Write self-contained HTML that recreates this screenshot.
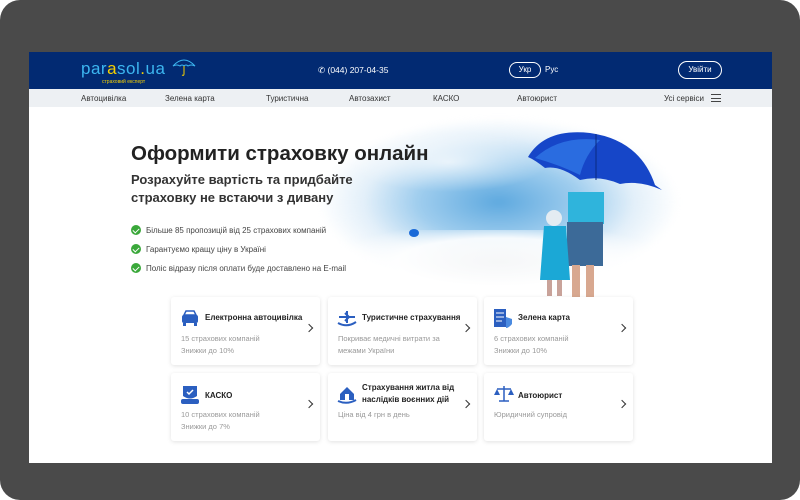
<!DOCTYPE html><html><head><meta charset="utf-8"><style>
*{margin:0;padding:0;box-sizing:border-box}
body{width:800px;height:500px;background:#fff;font-family:"Liberation Sans",sans-serif;position:relative;overflow:hidden}
.frame{position:absolute;left:0;top:0;width:800px;height:500px;background:#4a4a4a;border-radius:20px}
.page{position:absolute;left:29px;top:52px;width:743px;height:411px;background:#fff;overflow:hidden}
.hdr{position:absolute;left:0;top:0;width:743px;height:37px;background:#022a72}
.nav{position:absolute;left:0;top:37px;width:743px;height:18px;background:#edf0f3;font-size:8px;color:#333}
.nav span{position:absolute;top:5px}
.abs{position:absolute}
.card{position:absolute;width:149px;height:68px;background:#fff;border-radius:3px;box-shadow:0 1px 4px rgba(0,0,0,.12)}
.card b{position:absolute;left:34px;font-size:8px;color:#222;line-height:12px}
.card p{position:absolute;left:10px;font-size:7.5px;color:#999;line-height:12px}
.card i{position:absolute;right:8px;top:28px;width:6px;height:6px;border-right:1.5px solid #333;border-top:1.5px solid #333;transform:rotate(45deg)}
.card svg{position:absolute;left:9px;top:12px}
.chk{position:absolute;left:102px;width:10px;height:10px;border-radius:50%;background:#3aa83a}
.chk:after{content:"";position:absolute;left:3px;top:2px;width:3px;height:5px;border-right:1.5px solid #fff;border-bottom:1.5px solid #fff;transform:rotate(45deg)}
.li{position:absolute;left:117px;font-size:8px;color:#444}
</style></head><body>
<div class="frame"></div>
<div class="page">
<div class="hdr">
 <div class="abs" style="left:52px;top:7px;font-size:17px;letter-spacing:0.5px;color:#3cb6f0;font-weight:300">par<span style="color:#f5d000">a</span>sol<span style="color:#f5d000">.</span>ua</div>
 <div class="abs" style="left:73px;top:27px;font-size:5px;color:#f5d000">страховий експерт</div>
 <svg class="abs" style="left:142px;top:5px" width="26" height="20" viewBox="0 0 26 20"><path d="M2 9 Q13 -3 24 9 Q20 7 17 9 Q15 7 13 9 Q11 7 9 9 Q6 7 2 9Z" fill="none" stroke="#3cb6f0" stroke-width="1"/><path d="M13 9 V17 Q13 19 11 18" fill="none" stroke="#f5d000" stroke-width="1"/></svg>
 <div class="abs" style="left:289px;top:13px;font-size:8.5px;color:#fff">✆ (044) 207-04-35</div>
 <div class="abs" style="left:480px;top:10px;width:32px;height:16px;border:1px solid #fff;border-radius:8px;color:#fff;font-size:8px;text-align:center;line-height:14px">Укр</div>
 <div class="abs" style="left:516px;top:13px;color:#fff;font-size:8px">Рус</div>
 <div class="abs" style="left:649px;top:9px;width:44px;height:18px;border:1px solid #fff;border-radius:9px;color:#fff;font-size:8px;text-align:center;line-height:16px">Увійти</div>
</div>
<div class="nav">
 <span style="left:52px">Автоцивілка</span><span style="left:136px">Зелена карта</span><span style="left:237px">Туристична</span><span style="left:320px">Автозахист</span><span style="left:404px">КАСКО</span><span style="left:488px">Автоюрист</span><span style="left:635px">Усі сервіси</span>
 <div class="abs" style="left:682px;top:5px;width:10px;height:8px;border-top:1.3px solid #444;border-bottom:1.3px solid #444"></div>
 <div class="abs" style="left:682px;top:8.5px;width:10px;height:1.3px;background:#444"></div>
</div>
<!-- hero image -->
<div class="abs" style="left:290px;top:60px;width:360px;height:200px;background:radial-gradient(ellipse 50% 42% at 50% 45%,#5ea9df 0%,#9fcdee 45%,rgba(215,233,247,.7) 75%,rgba(255,255,255,0) 100%);filter:blur(3px)"></div>
<div class="abs" style="left:320px;top:80px;width:200px;height:60px;background:radial-gradient(ellipse 50% 50% at 50% 50%,rgba(255,255,255,.7),rgba(255,255,255,0));"></div>
<div class="abs" style="left:300px;top:178px;width:340px;height:80px;background:radial-gradient(ellipse 50% 50% at 50% 40%,#f6f7f8 0%,rgba(255,255,255,.9) 60%,rgba(255,255,255,0) 100%)"></div>
<svg class="abs" style="left:-29px;top:-52px" width="800" height="500">
 <path d="M528 157 Q545 128 590 133 Q640 140 655 185 Q662 190 662 190 Q640 180 620 184 Q600 175 580 180 Q560 165 545 168 Q535 160 528 157Z" fill="#1646c8"/>
 <path d="M535 158 Q560 135 600 140 Q585 155 580 175 Q560 165 535 158Z" fill="#2a6ce0"/>
 <line x1="596" y1="134" x2="596" y2="180" stroke="#0b2a80" stroke-width="1"/>
 <rect x="568" y="192" width="36" height="32" fill="#2fb4dc"/>
 <rect x="567" y="222" width="36" height="44" fill="#3c6a98"/>
 <rect x="572" y="265" width="8" height="32" fill="#d8a890"/><rect x="586" y="265" width="8" height="32" fill="#d8a890"/>
 <circle cx="554" cy="218" r="8" fill="#e4ecf2"/>
 <path d="M544 226 H566 L570 280 H540Z" fill="#1ba8d6"/>
 <rect x="547" y="280" width="5" height="16" fill="#c9a39a"/><rect x="557" y="280" width="5" height="16" fill="#c9a39a"/>
 <ellipse cx="414" cy="233" rx="5" ry="4" fill="#1a6ad8"/>
</svg>
<div class="abs" style="left:102px;top:90px;font-size:20.5px;font-weight:bold;color:#222">Оформити страховку онлайн</div>
<div class="abs" style="left:102px;top:119px;font-size:13px;color:#333;line-height:18px;font-weight:bold">Розрахуйте вартість та придбайте<br>страховку не встаючи з дивану</div>
<div class="chk" style="top:173px"></div><div class="li" style="top:174px">Більше 85 пропозицій від 25 страхових компаній</div>
<div class="chk" style="top:192px"></div><div class="li" style="top:193px">Гарантуємо кращу ціну в Україні</div>
<div class="chk" style="top:211px"></div><div class="li" style="top:212px">Поліс відразу після оплати буде доставлено на E-mail</div>
<!-- cards -->
<div class="card" style="left:142px;top:245px"><svg width="20" height="18"><rect x="2" y="6" width="16" height="8" rx="2" fill="#2b5fc0"/><path d="M4 6 L6 2 H14 L16 6Z" fill="none" stroke="#2b5fc0" stroke-width="1.5"/><rect x="3" y="14" width="3" height="3" fill="#2b5fc0"/><rect x="14" y="14" width="3" height="3" fill="#2b5fc0"/></svg><b style="top:15px">Електронна автоцивілка</b><p style="top:36px">15 страхових компаній<br>Знижки до 10%</p><i></i></div>
<div class="card" style="left:299px;top:245px"><svg width="20" height="18"><path d="M2 8 H18 M8 4 L12 8 L8 12 M10 2 V14" stroke="#2b5fc0" stroke-width="2" fill="none"/><path d="M1 14 Q10 19 19 13" stroke="#2b5fc0" stroke-width="2" fill="none"/></svg><b style="top:15px">Туристичне страхування</b><p style="top:36px">Покриває медичні витрати за<br>межами України</p><i></i></div>
<div class="card" style="left:455px;top:245px"><svg width="20" height="20"><rect x="1" y="0" width="12" height="18" fill="#2b5fc0"/><path d="M3 4 H11 M3 8 H11 M3 12 H9" stroke="#fff" stroke-width="1"/><path d="M13 8 L19 10 V15 Q16 19 13 19Z" fill="#4a8ae0"/></svg><b style="top:15px">Зелена карта</b><p style="top:36px">6 страхових компаній<br>Знижки до 10%</p><i></i></div>
<div class="card" style="left:142px;top:321px"><svg width="20" height="20"><path d="M3 1 H17 V11 Q10 16 3 11Z" fill="#2b5fc0"/><path d="M7 7 L9 9 L13 5" stroke="#fff" stroke-width="1.5" fill="none"/><rect x="1" y="14" width="18" height="5" rx="2" fill="#2b5fc0"/></svg><b style="top:17px">КАСКО</b><p style="top:36px">10 страхових компаній<br>Знижки до 7%</p><i></i></div>
<div class="card" style="left:299px;top:321px"><svg width="20" height="20"><path d="M3 9 L10 2 L17 9 V15 H3Z" fill="#2b5fc0"/><rect x="8" y="9" width="4" height="6" fill="#fff"/><path d="M1 16 Q10 20 19 15" stroke="#2b5fc0" stroke-width="2" fill="none"/></svg><b style="top:9px">Страхування житла від<br>наслідків воєнних дій</b><p style="top:36px">Ціна від 4 грн в день</p><i></i></div>
<div class="card" style="left:455px;top:321px"><svg width="22" height="18"><path d="M11 1 V16 M4 4 H18 M6 16 H16" stroke="#2b5fc0" stroke-width="1.5"/><path d="M1 10 L4 4 L7 10Z M15 10 L18 4 L21 10Z" fill="#2b5fc0"/></svg><b style="top:17px">Автоюрист</b><p style="top:36px">Юридичний супровід</p><i></i></div>
</div>
</body></html>
